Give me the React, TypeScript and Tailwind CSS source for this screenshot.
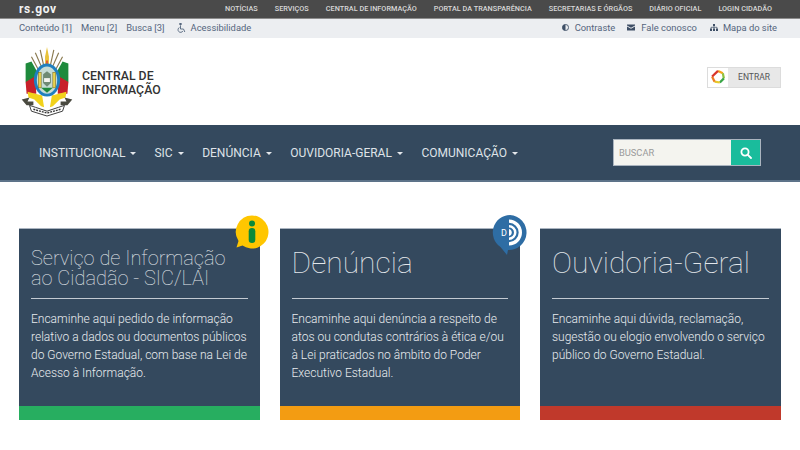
import React from "react";

function Caret() {
  return <span className="ml-[5px] inline-block align-middle w-0 h-0 border-x-[3.5px] border-x-transparent border-t-[3.5px] border-t-[#e4e8ec]" />;
}

function Crest() {
  return (
    <svg width="54" height="70" viewBox="0 0 54 72" className="shrink-0">
      <path d="M27 0 L29 10 L29 20 L25 20 L25 10Z" fill="#e9c33a" />
      <path d="M15 6 L22 22 M39 6 L32 22 M11 10 L19 25 M43 10 L35 25 M20 3 L24 21 M34 3 L30 21" stroke="#8a7a50" strokeWidth="1.2" />
      <path d="M27 14V24" stroke="#d33" strokeWidth="1.5" />
      <path d="M5 17 L11 15 L16 24 L17 32 L8 40 L5 36Z" fill="#1e8a3c" />
      <path d="M49 17 L43 15 L38 24 L37 32 L46 40 L49 36Z" fill="#1e8a3c" />
      <path d="M5 36 L15 30 L16 48 L6 48Z" fill="#c8202a" />
      <path d="M49 36 L39 30 L38 48 L48 48Z" fill="#c8202a" />
      <path d="M7 46 L22 50 L24 62 L21 61 L14 54 L8 52Z" fill="#f2d21b" />
      <path d="M47 46 L32 50 L30 62 L33 61 L40 54 L46 52Z" fill="#f2d21b" />
      <ellipse cx="27" cy="34" rx="13.5" ry="17" fill="#1f7fbf" />
      <ellipse cx="27" cy="34" rx="10.5" ry="14" fill="#c6dcd6" />
      <rect x="18" y="26" width="3" height="16" fill="#e8d24e" stroke="#6b5d20" strokeWidth="0.5" />
      <rect x="33" y="26" width="3" height="16" fill="#e8d24e" stroke="#6b5d20" strokeWidth="0.5" />
      <path d="M23 28 L27 25 L31 28 L31 37 L27 41 L23 37Z" fill="#6f8a74" />
      <path d="M24 32 H30 V36 H24Z" fill="#f5f5f0" />
      <path d="M21 42 H33 L27 47Z" fill="#1e8a3c" />
      <path d="M1 54 L9 52 L7 56 L13 56 L13 60 L6 60Z M53 54 L45 52 L47 56 L41 56 L41 60 L48 60Z" fill="#4a4a40" />
      <path d="M9 60 L15 62 L27 66 L39 62 L45 60 L43 66 L27 71 L11 66Z" fill="#fff" stroke="#3a3a3a" strokeWidth="1" />
      <path d="M13 64 L27 68 L41 64" stroke="#333" strokeWidth="1.4" strokeDasharray="2 1" fill="none" />
    </svg>
  );
}

function InfoBadge() {
  return (
    <svg width="34" height="34" viewBox="0 0 34 34" className="absolute -top-[14px] -right-[9.5px]">
      <path d="M17 0.5a16.5 16.5 0 1 1-9.5 30 L1.5 32.5 L3.5 26A16.5 16.5 0 0 1 17 0.5Z" fill="#ffc600" />
      <circle cx="17" cy="8.5" r="3" fill="#0a8a3a" />
      <rect x="13.7" y="13" width="6.6" height="15" rx="3.3" fill="#0a8a3a" />
    </svg>
  );
}

function DenunciaBadge() {
  return (
    <svg width="36" height="41" viewBox="0 0 36 41" className="absolute -top-[14px] -right-[8px]">
      <path d="M18 0a17.5 17.5 0 1 1-2 35 L15 40 L8.5 32 A17.5 17.5 0 0 1 18 0Z" fill="#2e6da4" />
      <path d="M17 4.5a13 13 0 0 1 0 26v-3.3a9.7 9.7 0 0 0 0-19.4Z" fill="#fff" />
      <path d="M17 10a7.5 7.5 0 0 1 0 15v-2.5a5 5 0 0 0 0-10Z" fill="#fff" />
      <path d="M17 14a3.6 3.6 0 0 1 0 7Z" fill="#fff" />
      <text x="12" y="21" fontSize="9" fill="#fff" textAnchor="middle" fontFamily="Roboto, sans-serif">D</text>
    </svg>
  );
}

function LoginRing() {
  return (
    <svg width="14" height="14" viewBox="0 0 15 15">
      <path d="M7.5 1 L12.7 3.4" stroke="#f5a51d" strokeWidth="2.4" fill="none" />
      <path d="M12.7 3.4 L13.8 9" stroke="#8fc23f" strokeWidth="2.4" fill="none" />
      <path d="M13.8 9 L9.5 13.4" stroke="#3aa648" strokeWidth="2.4" fill="none" />
      <path d="M9.5 13.4 L3.8 12.5" stroke="#e7c92b" strokeWidth="2.4" fill="none" />
      <path d="M3.8 12.5 L1.2 7" stroke="#ee7d22" strokeWidth="2.4" fill="none" />
      <path d="M1.2 7 L7.5 1" stroke="#d9352a" strokeWidth="2.4" fill="none" />
    </svg>
  );
}

function Card({ title, small, body, strip, badge, ml }: { title: React.ReactNode; small?: boolean; body: string[]; strip: string; badge?: React.ReactNode; ml: string }) {
  return (
    <div className={`relative w-[240.5px] h-[192px] shrink-0 flex flex-col bg-[#34495e] border-t border-t-[#aab4c0] ${ml}`}>
      {badge}
      <div className="flex-1 px-3 flex flex-col">
        <div className={`h-[70px] border-b border-b-[#c3cad2] text-[#e3e7eb] font-thin whitespace-nowrap ${small ? "pt-[19px] text-[20px] leading-[20px]" : "pt-[13px] text-[30px] leading-[41px]"}`}>
          {title}
        </div>
        <div className="pt-[11px] text-[12px] leading-[18px] text-[#e9ecef] font-light whitespace-nowrap">
          {body.map((l) => (
            <div key={l}>{l}</div>
          ))}
        </div>
      </div>
      <div className={`h-[14px] ${strip}`} />
    </div>
  );
}

export default function App() {
  return (
    <div className="w-[800px] h-[450px] overflow-hidden bg-white font-['Roboto',sans-serif]">
      <div className="h-[19px] bg-[#4a4a4a] border-b border-b-[#8c8c8c] flex items-center pl-[19px] pr-[28px]">
        <span className="text-[12px] font-bold tracking-[0.7px] text-[#f2f2f2]">rs.gov</span>
        <div className="ml-auto flex gap-[17px] text-[7.3px] font-medium text-[#d8d8d8] whitespace-nowrap">
          <span>NOTÍCIAS</span>
          <span>SERVIÇOS</span>
          <span>CENTRAL DE INFORMAÇÃO</span>
          <span>PORTAL DA TRANSPARÊNCIA</span>
          <span>SECRETARIAS E ÓRGÃOS</span>
          <span>DIÁRIO OFICIAL</span>
          <span>LOGIN CIDADÃO</span>
        </div>
      </div>
      <div className="h-[19px] pb-[1px] bg-[#eceef1] flex items-center pl-[19px] pr-[23px] text-[9.4px] text-[#54657d] whitespace-nowrap">
        <span>Conteúdo [1]</span>
        <span className="ml-[9px]">Menu [2]</span>
        <span className="ml-[9px]">Busca [3]</span>
        <svg className="ml-[12px]" width="9" height="10" viewBox="0 0 9 10" fill="none" stroke="#54657d" strokeWidth="0.9">
          <circle cx="3.5" cy="1" r="0.9" fill="#54657d" />
          <path d="M3.5 2.5V6H6.5L7.8 9" />
          <path d="M2.5 4.4a2.6 2.6 0 1 0 3.4 3.6" />
        </svg>
        <span className="ml-[5px]">Acessibilidade</span>
        <div className="ml-auto flex items-center">
          <svg width="7" height="7" viewBox="0 0 8 8">
            <circle cx="4" cy="4" r="3.5" fill="none" stroke="#3e4f66" />
            <path d="M4 .5a3.5 3.5 0 0 0 0 7Z" fill="#3e4f66" />
          </svg>
          <span className="ml-[6px]">Contraste</span>
          <svg className="ml-[12px]" width="8" height="7" viewBox="0 0 8 7">
            <path d="M0 0.5H8V1.5L4 3.8L0 1.5Z M0 2.6L4 4.8L8 2.6V6.5H0Z" fill="#3e4f66" />
          </svg>
          <span className="ml-[6px]">Fale conosco</span>
          <svg className="ml-[13px]" width="8" height="7" viewBox="0 0 8 7">
            <path d="M3 0H5V2H3Z M0 4.5H2V7H0Z M3 4.5H5V7H3Z M6 4.5H8V7H6Z" fill="#3e4f66" />
            <path d="M1 4.5V3.3H7V4.5M4 2V4.5" stroke="#3e4f66" strokeWidth="0.7" fill="none" />
          </svg>
          <span className="ml-[5px]">Mapa do site</span>
        </div>
      </div>
      <div className="h-[87px] flex items-center pl-[20px] pr-[19px]">
        <Crest />
        <div className="ml-[8px] mt-[3px] text-[12.3px] leading-[14.5px] font-medium text-[#333]">
          CENTRAL DE
          <br />
          INFORMAÇÃO
        </div>
        <div className="ml-auto -mt-[9px] h-[21px] w-[74px] flex border border-[#dcdcdc] bg-[#e8e8e8]">
          <div className="w-[20px] bg-white flex items-center justify-center">
            <LoginRing />
          </div>
          <div className="flex-1 flex items-center justify-center text-[8.5px] text-[#555]">ENTRAR</div>
        </div>
      </div>
      <div className="h-[57px] bg-[#34495e] border-b-2 border-b-[#5d7389] flex items-center pl-[39px] pr-[39px]">
        <div className="flex text-[12px] text-[#dfe3e8] whitespace-nowrap">
          <span>INSTITUCIONAL<Caret /></span>
          <span className="ml-[18px]">SIC<Caret /></span>
          <span className="ml-[18.5px]">DENÚNCIA<Caret /></span>
          <span className="ml-[18.5px]">OUVIDORIA-GERAL<Caret /></span>
          <span className="ml-[18.5px]">COMUNICAÇÃO<Caret /></span>
        </div>
        <div className="ml-auto flex h-[27px] w-[148px] border border-[#aab4bf]">
          <div className="flex-1 bg-[#f4f4ef] flex items-center pl-[5px] text-[9.3px] text-[#9a9a9a]">BUSCAR</div>
          <div className="w-[29px] bg-[#1abc9c] flex items-center justify-center">
            <svg width="12" height="12" viewBox="0 0 12 12" fill="none" stroke="#fff" strokeWidth="1.8">
              <circle cx="5" cy="5" r="3.6" />
              <path d="M7.6 7.6L11 11" strokeLinecap="round" />
            </svg>
          </div>
        </div>
      </div>
      <div className="flex pt-[46px] pl-[19px]">
        <Card
          ml=""
          small
          title={<>Serviço de Informação<br />ao Cidadão - SIC/LAI</>}
          body={["Encaminhe aqui pedido de informação", "relativo a dados ou documentos públicos", "do Governo Estadual, com base na Lei de", "Acesso à Informação."]}
          strip="bg-[#27ae60]"
          badge={<InfoBadge />}
        />
        <Card
          ml="ml-[20px]"
          title="Denúncia"
          body={["Encaminhe aqui denúncia a respeito de", "atos ou condutas contrários à ética e/ou", "à Lei praticados no âmbito do Poder", "Executivo Estadual."]}
          strip="bg-[#f39c12]"
          badge={<DenunciaBadge />}
        />
        <Card
          ml="ml-[20px]"
          title="Ouvidoria-Geral"
          body={["Encaminhe aqui dúvida, reclamação,", "sugestão ou elogio envolvendo o serviço", "público do Governo Estadual."]}
          strip="bg-[#c0392b]"
        />
      </div>
    </div>
  );
}
